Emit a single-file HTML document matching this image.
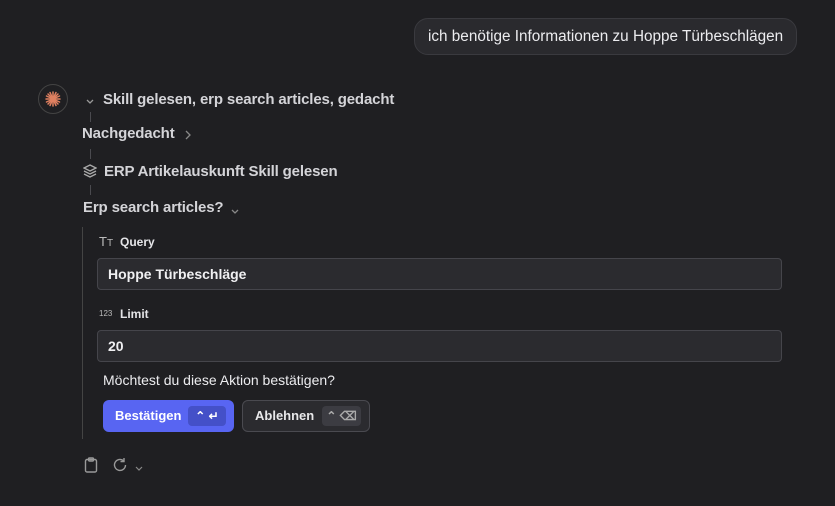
<!DOCTYPE html>
<html><head><style>
body{margin:0;width:835px;height:506px;background:#1f1f22;font-family:"Liberation Sans",sans-serif;color:#e4e4e7;position:relative;overflow:hidden}
.a{position:absolute}
.bubble{left:414px;top:18px;width:383px;height:37px;box-sizing:border-box;border:1px solid #3a3a3f;background:#2a2a2e;border-radius:14px;font-size:15.3px;line-height:35px;padding-left:13px;color:#ececef}
.av{left:38px;top:84px;width:30px;height:30px;border-radius:50%;border:1px solid #444;box-sizing:border-box}
.t{font-size:15px;font-weight:bold;color:#d4d4d8;letter-spacing:-0.15px}
.ln{width:1px;background:#4a4a4f}
.inp{left:97px;width:685px;height:32px;box-sizing:border-box;border:1px solid #45454b;background:#2b2b2f;border-radius:4px;font-size:14px;font-weight:bold;line-height:30px;padding-left:10px;color:#f0f0f2}
.lbl{font-size:12px;font-weight:bold;color:#e4e4e7}
.btn{height:32px;top:400px;border-radius:6px;box-sizing:border-box;font-size:13px;font-weight:bold;line-height:32px}
.kb{position:absolute;top:6px;height:20px;border-radius:4px;font-size:12px;line-height:20px;text-align:center}
</style></head><body>
<div class="a bubble">ich benötige Informationen zu Hoppe Türbeschlägen</div>
<div class="a av"><svg width="28" height="28" viewBox="0 0 28 28"><g stroke="#e08060" stroke-width="1.5" stroke-linecap="round"><line x1="14" y1="7" x2="14" y2="21"/><line x1="7" y1="14" x2="21" y2="14"/><line x1="9" y1="9" x2="19" y2="19"/><line x1="19" y1="9" x2="9" y2="19"/><line x1="11" y1="7.5" x2="17" y2="20.5"/><line x1="17" y1="7.5" x2="11" y2="20.5"/><line x1="7.5" y1="11" x2="20.5" y2="17"/><line x1="7.5" y1="17" x2="20.5" y2="11"/></g></svg></div>
<div class="a" style="left:85px;top:93px"><svg width="10" height="10" viewBox="0 0 10 10" fill="none" stroke="#999" stroke-width="1.3"><path d="M2 4l3 3 3-3"/></svg></div>
<div class="a t" style="left:103px;top:91px">Skill gelesen, erp search articles, gedacht</div>
<div class="a ln" style="left:90px;top:112px;height:10px"></div>
<div class="a t" style="left:82px;top:125px">Nachgedacht</div>
<div class="a" style="left:183px;top:128px"><svg width="10" height="12" viewBox="0 0 10 12" fill="none" stroke="#888" stroke-width="1.3"><path d="M3 2l4 4-4 4"/></svg></div>
<div class="a ln" style="left:90px;top:149px;height:10px"></div>
<div class="a" style="left:83px;top:164px"><svg width="14" height="14" viewBox="0 0 14 14" fill="none" stroke="#aaa" stroke-width="1.3"><path d="M7 1L13 4 7 7 1 4Z"/><path d="M1 7l6 3 6-3"/><path d="M1 10l6 3 6-3"/></svg></div>
<div class="a t" style="left:104px;top:163px">ERP Artikelauskunft Skill gelesen</div>
<div class="a ln" style="left:90px;top:185px;height:10px"></div>
<div class="a t" style="left:83px;top:199px">Erp search articles?</div>
<div class="a" style="left:230px;top:203px"><svg width="10" height="10" viewBox="0 0 10 10" fill="none" stroke="#888" stroke-width="1.3"><path d="M2 4l3 3 3-3"/></svg></div>
<div class="a ln" style="left:82px;top:227px;height:212px;background:#444"></div>
<div class="a" style="left:99px;top:234px;font-size:13px;color:#bbb">T<span style="font-size:10px">T</span></div>
<div class="a lbl" style="left:120px;top:235px">Query</div>
<div class="a inp" style="top:258px">Hoppe Türbeschläge</div>
<div class="a" style="left:99px;top:309px;font-size:8px;color:#bbb">123</div>
<div class="a lbl" style="left:120px;top:307px">Limit</div>
<div class="a inp" style="top:330px">20</div>
<div class="a" style="left:103px;top:372px;font-size:14px;color:#ececef">Möchtest du diese Aktion bestätigen?</div>
<div class="a btn" style="left:103px;width:131px;background:#5865f2;color:#fff;padding-left:12px">Bestätigen<div class="kb" style="left:85px;width:38px;background:#4450c8">⌃ ↵</div></div>
<div class="a btn" style="left:242px;width:128px;background:#2b2b2f;border:1px solid #4a4a50;color:#e8e8ea;padding-left:12px;line-height:30px">Ablehnen<div class="kb" style="left:79px;top:5px;width:39px;background:#3c3c42;color:#aaa">⌃ ⌫</div></div>
<div class="a" style="left:84px;top:457px"><svg width="14" height="16" viewBox="0 0 14 16" fill="none" stroke="#999" stroke-width="1.4"><rect x="1.5" y="2.5" width="11" height="12.5" rx="1.5"/><rect x="4.5" y="1" width="5" height="3" rx="1"/></svg></div>
<div class="a" style="left:112px;top:457px"><svg width="16" height="16" viewBox="0 0 16 16" fill="none" stroke="#999" stroke-width="1.4"><path d="M13.5 8A5.5 5.5 0 1 1 11.5 3.7"/><path d="M12 1v3.5H8.5"/></svg></div>
<div class="a" style="left:134px;top:460px"><svg width="10" height="10" viewBox="0 0 10 10" fill="none" stroke="#888" stroke-width="1.2"><path d="M2 4l3 3 3-3"/></svg></div>
</body></html>
